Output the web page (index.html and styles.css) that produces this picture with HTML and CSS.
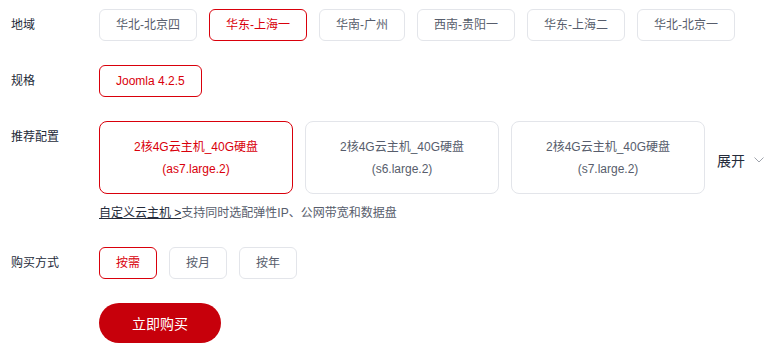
FILE: index.html
```html
<!DOCTYPE html>
<html lang="zh-CN">
<head>
    <meta charset="UTF-8">
    <meta name="viewport" content="width=device-width, initial-scale=1.0">
    <title>购买云主机</title>
    <link rel="stylesheet" href="styles.css">
</head>
<body>
    <div class="order-form">
        <div class="form-row">
            <div class="form-label">地域</div>
            <div class="options">
                <span class="option">华北-北京四</span>
                <span class="option selected">华东-上海一</span>
                <span class="option">华南-广州</span>
                <span class="option">西南-贵阳一</span>
                <span class="option">华东-上海二</span>
                <span class="option">华北-北京一</span>
            </div>
        </div>

        <div class="form-row">
            <div class="form-label">规格</div>
            <div class="options">
                <span class="option selected">Joomla 4.2.5</span>
            </div>
        </div>

        <div class="form-row">
            <div class="form-label">推荐配置</div>
            <div class="config-block">
                <div class="config-list">
                    <div class="config-card selected">
                        <div>2核4G云主机_40G硬盘</div>
                        <div>(as7.large.2)</div>
                    </div>
                    <div class="config-card">
                        <div>2核4G云主机_40G硬盘</div>
                        <div>(s6.large.2)</div>
                    </div>
                    <div class="config-card">
                        <div>2核4G云主机_40G硬盘</div>
                        <div>(s7.large.2)</div>
                    </div>
                    <div class="expand">
                        展开
                        <svg width="10" height="6" viewBox="0 0 10 6"><path d="M0.5 0.5 L5 5 L9.5 0.5" fill="none" stroke="#a0a4ad" stroke-width="1"/></svg>
                    </div>
                </div>
                <div class="custom-tip">
                    <a href="#" class="custom-link">自定义云主机 &gt;</a>支持同时选配弹性IP、公网带宽和数据盘
                </div>
            </div>
        </div>

        <div class="form-row">
            <div class="form-label">购买方式</div>
            <div class="options">
                <span class="option selected">按需</span>
                <span class="option">按月</span>
                <span class="option">按年</span>
            </div>
        </div>

        <div class="form-row">
            <div class="form-label"></div>
            <button class="buy-btn">立即购买</button>
        </div>
    </div>
</body>
</html>
```

FILE: styles.css
```css
body {
    margin: 0;
    padding: 9px 0 0 11px;
    font-family: "Liberation Sans", "Noto Sans CJK SC", sans-serif;
    font-size: 12px;
    color: #252b3a;
    background-color: white;
}
.order-form {
    display: flex;
    flex-direction: column;
    gap: 24px;
}
.form-row {
    display: flex;
    align-items: flex-start;
}
.form-label {
    width: 88px;
    flex-shrink: 0;
    line-height: 32px;
    color: #252b3a;
}
.options {
    display: flex;
    gap: 12px;
}
.option {
    height: 30px;
    line-height: 30px;
    padding: 0 16px;
    border: 1px solid #e3e5ea;
    border-radius: 6px;
    color: #575d6c;
    white-space: nowrap;
}
.option.selected {
    border-color: #d9000b;
    color: #d9000b;
}
.config-list {
    display: flex;
    gap: 12px;
    align-items: center;
}
.config-card {
    width: 192px;
    height: 71px;
    border: 1px solid #e3e5ea;
    border-radius: 8px;
    display: flex;
    flex-direction: column;
    justify-content: center;
    align-items: center;
    line-height: 22px;
    color: #575d6c;
}
.config-card.selected {
    border-color: #d9000b;
    color: #d9000b;
}
.expand {
    display: flex;
    align-items: center;
    gap: 9px;
    font-size: 14px;
    color: #252b3a;
    padding-top: 5px;
}
.custom-tip {
    margin-top: 9px;
    line-height: 20px;
    color: #575d6c;
}
.custom-link {
    color: #252b3a;
    text-decoration: underline;
}
.buy-btn {
    width: 122px;
    height: 40px;
    border: none;
    border-radius: 20px;
    background-color: #c7000b;
    color: white;
    font-family: inherit;
    font-size: 14px;
    cursor: pointer;
}
```
